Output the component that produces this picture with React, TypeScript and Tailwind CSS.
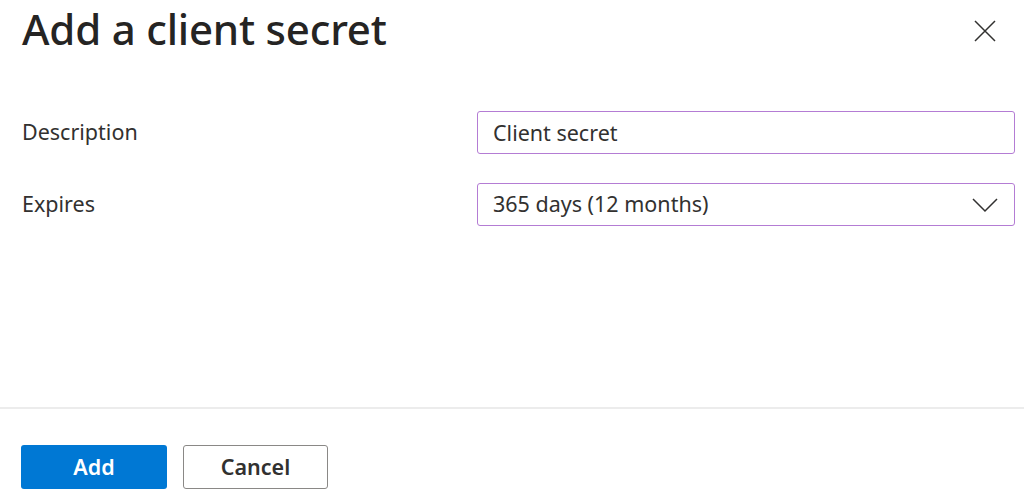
const fontStack = { fontFamily: '"Noto Sans", "Open Sans", sans-serif' }

const App: React.FC = () => {
  return (
    <div
      className="flex h-[493px] w-[1024px] flex-col overflow-hidden bg-white text-[#323130]"
      style={fontStack}
    >
      <header className="flex items-start justify-between pl-[22px] pr-[26px] pt-[1px]">
        <h1 className="text-[42px] font-medium leading-[56px] tracking-[-0.2px] text-[#252423]">
          Add a client secret
        </h1>
        <button
          type="button"
          aria-label="Close"
          className="mt-[17px] flex h-[26px] w-[26px] items-center justify-center text-[#323130]"
        >
          <svg width="24" height="24" viewBox="0 0 24 24" fill="none">
            <path d="M2 2L22 22M22 2L2 22" stroke="currentColor" strokeWidth="1.5" />
          </svg>
        </button>
      </header>

      <div className="mt-[54px] flex flex-col gap-[29px] pl-[22px] pr-[9px]">
        <div className="grid grid-cols-[455px_1fr] items-center">
          <label className="text-[21.5px]">Description</label>
          <input
            defaultValue="Client secret"
            className="h-[43px] rounded-[3px] border border-[#b47cd4] px-[15px] text-[21.5px] text-[#323130] outline-none"
            style={fontStack}
          />
        </div>
        <div className="grid grid-cols-[455px_1fr] items-center">
          <label className="text-[21.5px]">Expires</label>
          <div className="flex h-[43px] items-center justify-between rounded-[3px] border border-[#b47cd4] pl-[15px] pr-[16px] text-[21.5px]">
            <span>365 days (12 months)</span>
            <svg width="26" height="16" viewBox="0 0 26 16" fill="none">
              <path d="M1 2L13 14L25 2" stroke="#323130" strokeWidth="1.5" />
            </svg>
          </div>
        </div>
      </div>

      <div className="flex-1" />

      <footer className="flex gap-[16px] border-t-2 border-[#ececec] pl-[21px] pb-[4px] pt-[36px]">
        <button
          type="button"
          className="h-[44px] w-[146px] rounded-[3px] bg-[#0078d4] text-[21.5px] font-semibold text-white"
        >
          Add
        </button>
        <button
          type="button"
          className="h-[44px] w-[145px] rounded-[3px] border border-[#8a8886] bg-white text-[21.5px] font-semibold text-[#323130]"
        >
          Cancel
        </button>
      </footer>
    </div>
  )
}

export default App
